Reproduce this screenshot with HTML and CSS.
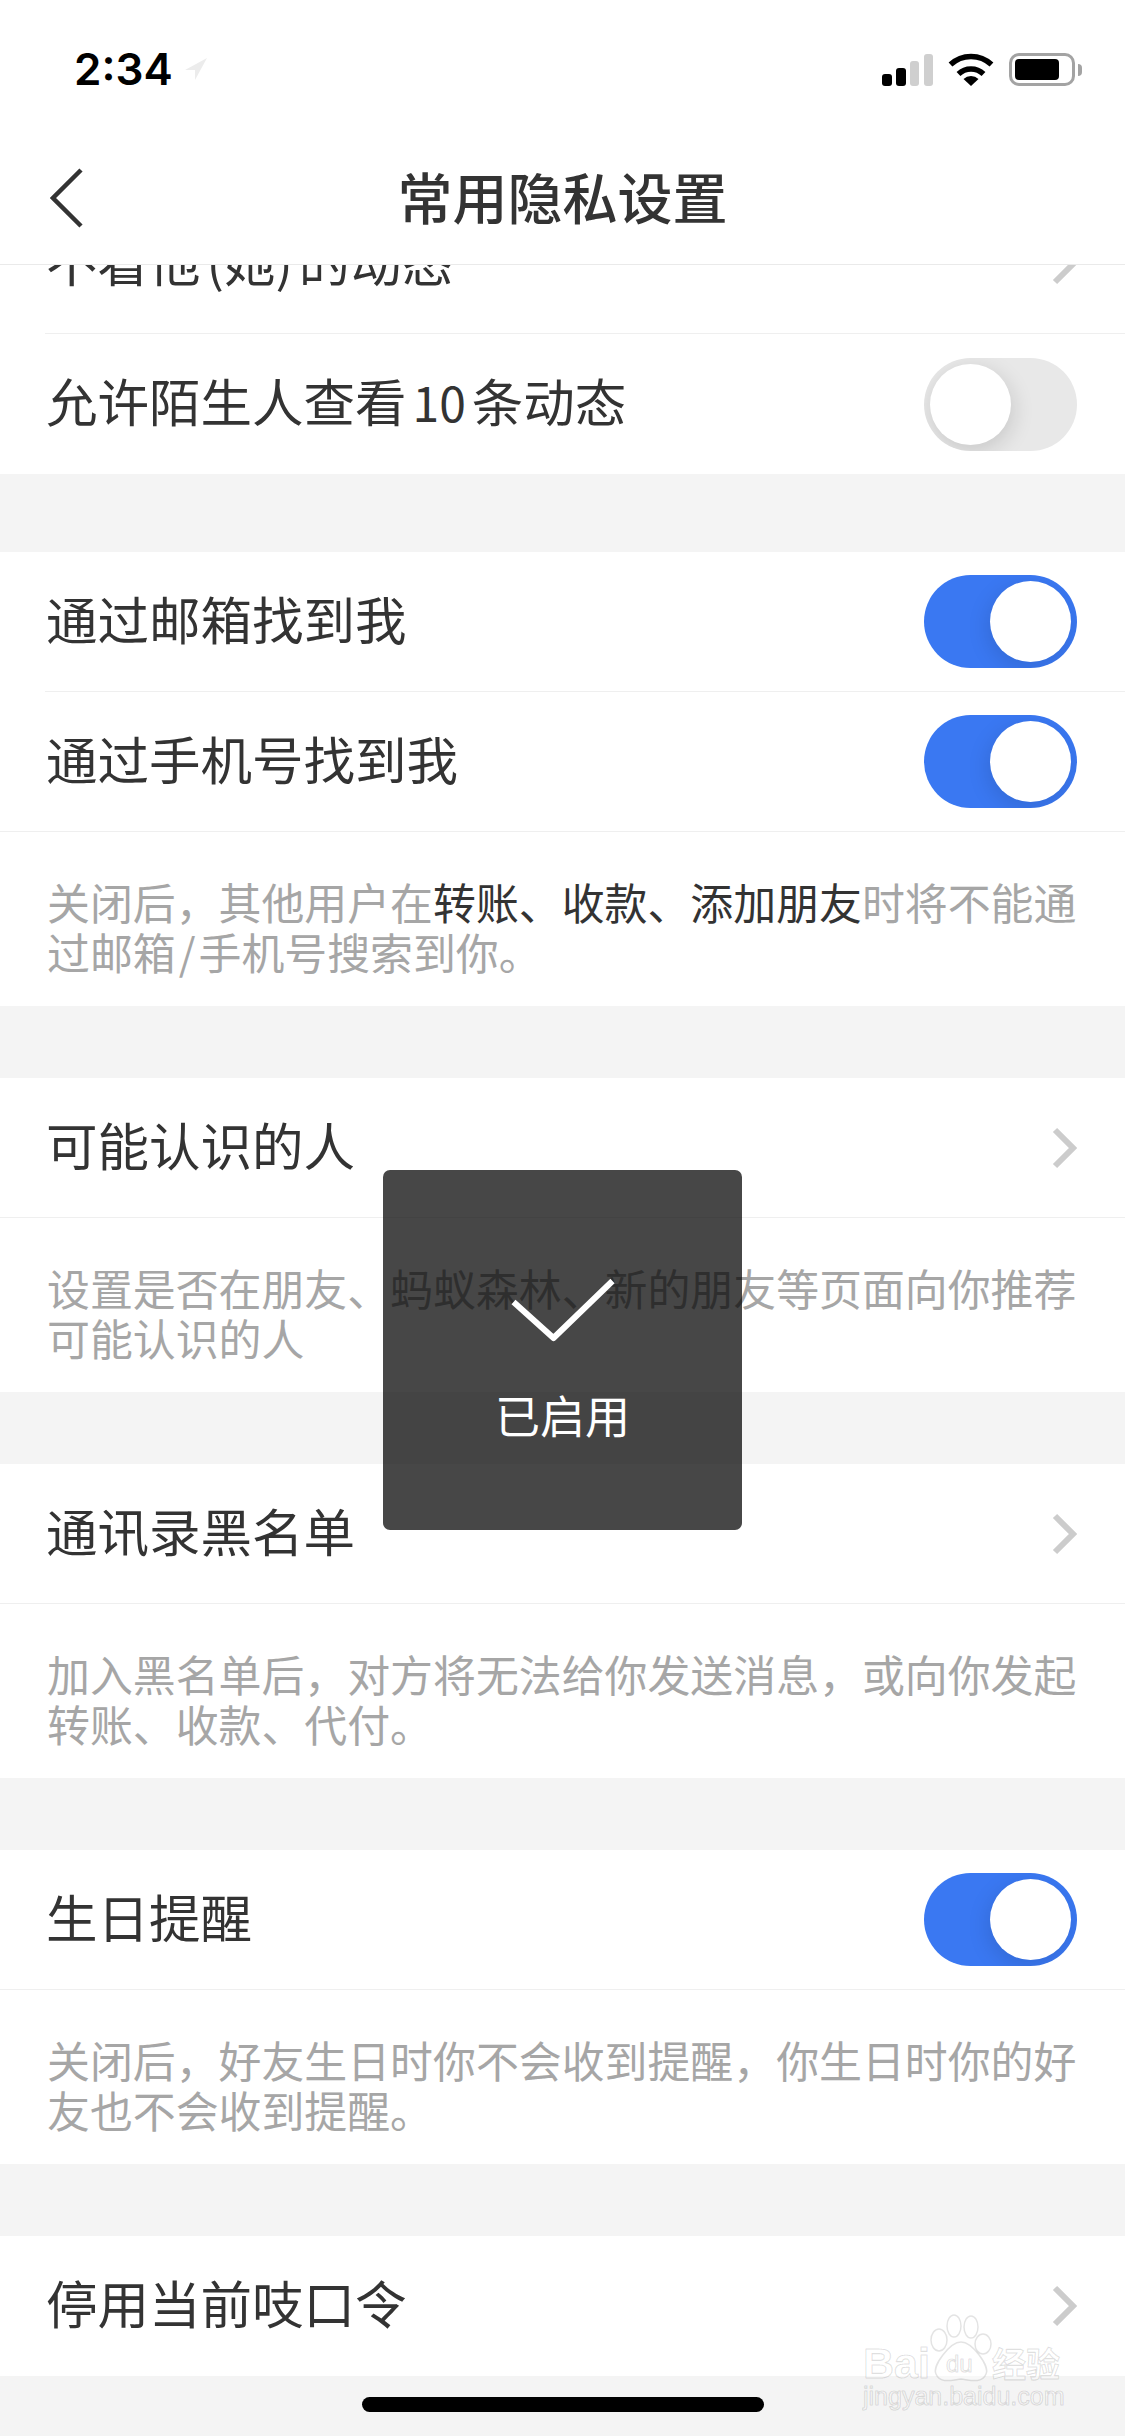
FILE: index.html
```html
<!DOCTYPE html>
<html lang="zh-CN">
<head>
<meta charset="utf-8">
<title>常用隐私设置</title>
<link rel="stylesheet" href="styles.css">
</head>
<body>
<div class="phone">
  <header class="top">
    <div class="status">
      <div class="status-left">
        <span class="time">2:34</span>
        <svg class="loc" width="22" height="22" viewBox="0 0 22 22"><path d="M22 0 L0 12 L10 12 L10 22 Z" fill="#ececec"/></svg>
      </div>
      <div class="status-right">
        <svg class="signal" width="51" height="32" viewBox="0 0 51 32">
          <rect x="0" y="20" width="10" height="12" rx="3" fill="#000"/>
          <rect x="14" y="14" width="10" height="18" rx="3" fill="#000"/>
          <rect x="28" y="7" width="9" height="25" rx="3" fill="#cfcfcf"/>
          <rect x="42" y="0" width="9" height="32" rx="3" fill="#cfcfcf"/>
        </svg>
        <svg class="wifi" width="46" height="33" viewBox="0 0 46 33">
          <path d="M2.5 11.5 A30 30 0 0 1 43.5 11.5" fill="none" stroke="#000" stroke-width="5.5"/>
          <path d="M10.5 21 A18 18 0 0 1 35.5 21" fill="none" stroke="#000" stroke-width="5.5"/>
          <path d="M23 33 L15.5 26 A11 11 0 0 1 30.5 26 Z" fill="#000"/>
        </svg>
        <div class="battery"><div class="battery-fill"></div></div>
        <div class="battery-tip"></div>
      </div>
    </div>
    <nav class="nav">
      <svg class="back" width="34" height="60" viewBox="0 0 34 60"><path d="M31 2 L3 30 L31 58" fill="none" stroke="#333" stroke-width="4.5"/></svg>
      <h1 class="title">常用隐私设置</h1>
      <span></span>
    </nav>
  </header>

  <main class="scroll">
    <section class="group group-clipped">
      <div class="row row-inset">
        <span class="label">不看他<span class="paren">(她)</span>的动态</span>
        <svg class="chev" width="28" height="44" viewBox="0 0 28 44"><path d="M6 4 L24 22 L6 40" fill="none" stroke="#ccc" stroke-width="6"/></svg>
      </div>
      <div class="row">
        <span class="label">允许陌生人查看<span class="num">10</span>条动态</span>
        <div class="toggle"><div class="knob"></div></div>
      </div>
    </section>

    <section class="group group-second">
      <div class="row row-inset">
        <span class="label">通过邮箱找到我</span>
        <div class="toggle on"><div class="knob"></div></div>
      </div>
      <div class="row row-full">
        <span class="label">通过手机号找到我</span>
        <div class="toggle on"><div class="knob"></div></div>
      </div>
      <p class="note">关闭后，其他用户在<em class="strong">转账、收款、添加朋友</em>时将不能通过邮箱<span class="slash">/</span>手机号搜索到你。</p>
    </section>

    <section class="group">
      <div class="row row-full">
        <span class="label">可能认识的人</span>
        <svg class="chev" width="28" height="44" viewBox="0 0 28 44"><path d="M6 4 L24 22 L6 40" fill="none" stroke="#ccc" stroke-width="6"/></svg>
      </div>
      <p class="note">设置是否在朋友、蚂蚁森林、新的朋友等页面向你推荐可能认识的人</p>
    </section>

    <section class="group">
      <div class="row row-full">
        <span class="label">通讯录黑名单</span>
        <svg class="chev" width="28" height="44" viewBox="0 0 28 44"><path d="M6 4 L24 22 L6 40" fill="none" stroke="#ccc" stroke-width="6"/></svg>
      </div>
      <p class="note">加入黑名单后，对方将无法给你发送消息，或向你发起转账、收款、代付。</p>
    </section>

    <section class="group">
      <div class="row row-full">
        <span class="label">生日提醒</span>
        <div class="toggle on"><div class="knob"></div></div>
      </div>
      <p class="note">关闭后，好友生日时你不会收到提醒，你生日时你的好友也不会收到提醒。</p>
    </section>

    <section class="group">
      <div class="row">
        <span class="label">停用当前吱口令</span>
        <svg class="chev" width="28" height="44" viewBox="0 0 28 44"><path d="M6 4 L24 22 L6 40" fill="none" stroke="#ccc" stroke-width="6"/></svg>
      </div>
    </section>
  </main>

  <div class="toast">
    <svg class="toast-check" width="112" height="68" viewBox="0 0 112 68"><path d="M6.5 24 L46.5 60 L105.5 3" fill="none" stroke="#fff" stroke-width="6" stroke-linejoin="round"/></svg>
    <span class="toast-text">已启用</span>
  </div>

  <svg class="watermark" width="204" height="104" viewBox="0 0 204 104">
    <g class="wm-paw">
      <ellipse cx="77" cy="28" rx="8" ry="11"/>
      <ellipse cx="92" cy="14" rx="7" ry="11"/>
      <ellipse cx="109" cy="15" rx="7" ry="11"/>
      <ellipse cx="121" cy="32" rx="8" ry="10"/>
      <path d="M99 30 C110 30 128 54 124 62 C120 72 108 68 99 67 C90 68 78 72 74 62 C70 54 88 30 99 30 Z"/>
    </g>
    <text class="wm-big" x="1" y="66">Bai</text>
    <text class="wm-du" x="84" y="60">du</text>
    <text class="wm-cn" x="130" y="65">经验</text>
    <text class="wm-url" x="1" y="93">jingyan.baidu.com</text>
  </svg>

  <div class="home"></div>
</div>
</body>
</html>
```

FILE: styles.css
```css
* { box-sizing: border-box; }
html, body { margin: 0; padding: 0; }
body {
  width: 1125px;
  height: 2436px;
  overflow: hidden;
  background: #f4f4f4;
  font-family: "Noto Sans CJK SC", "Noto Sans", sans-serif;
}
.phone {
  position: relative;
  width: 1125px;
  height: 2436px;
  overflow: hidden;
  display: flex;
  flex-direction: column;
}
.top {
  position: relative;
  z-index: 2;
  flex: none;
  background: #fff;
  border-bottom: 1px solid #eaeaea;
  height: 265px;
}
.status {
  height: 132px;
  display: flex;
  justify-content: space-between;
  align-items: flex-start;
  padding: 53px 43px 0 74px;
}
.status-left {
  display: flex;
  align-items: center;
  gap: 12px;
  height: 32px;
}
.time {
  font-family: Inter, Roboto, "Liberation Sans", sans-serif;
  font-weight: 600;
  font-size: 44px;
  line-height: 32px;
  color: #000;
}
.status-right {
  display: flex;
  align-items: center;
  height: 33px;
}
.signal { margin-right: 15px; }
.wifi { margin-right: 15px; }
.battery {
  width: 66px;
  height: 33px;
  border: 3px solid #a3a3a3;
  border-radius: 10px;
  padding: 3px;
}
.battery-fill {
  width: 44px;
  height: 21px;
  background: #000;
  border-radius: 4px;
}
.battery-tip {
  width: 4px;
  height: 12px;
  margin-left: 3px;
  background: #a3a3a3;
  border-radius: 0 5px 5px 0;
}
.nav {
  height: 132px;
  display: grid;
  grid-template-columns: 1fr auto 1fr;
  align-items: center;
}
.back { margin-left: 50px; }
.title {
  margin: 0;
  padding-bottom: 6px;
  font-size: 55px;
  line-height: 70px;
  font-weight: 500;
  color: #333;
}
.scroll {
  flex: none;
  margin-top: -71px;
}
.group { background: #fff; margin-top: 72px; }
.group-clipped { margin-top: 0; }
.group-second { margin-top: 78px; }
.row {
  height: 140px;
  padding: 0 48px 0 46px;
  display: flex;
  justify-content: space-between;
  align-items: center;
}
.row-inset {
  margin-left: 45px;
  padding-left: 1px;
  border-bottom: 1px solid #efefef;
}
.row-full { border-bottom: 1px solid #efefef; }
.label {
  font-size: 51.5px;
  line-height: 70px;
  padding-bottom: 8px;
  color: #333;
}
.num { font-size: 48px; margin: 0 6px; }
.paren { margin: 0 6px; }
.slash { margin: 0 3px; }
.note {
  margin: 0;
  height: 174px;
  padding: 44px 46px 0 47px;
  font-size: 42.9px;
  line-height: 50px;
  color: #a6a6a6;
}
.strong { font-style: normal; color: #333; }
.toggle {
  position: relative;
  width: 153px;
  height: 93px;
  border-radius: 47px;
  overflow: hidden;
  background: #e8e8e8;
  flex: none;
}
.toggle.on { background: #3a78f2; }
.knob {
  position: absolute;
  top: 6px;
  left: 6px;
  width: 81px;
  height: 81px;
  border-radius: 50%;
  background: #fff;
  box-shadow: 2px 6px 22px rgba(0, 0, 0, 0.14);
}
.toggle.on .knob {
  left: 66px;
  box-shadow: -2px 6px 22px rgba(0, 0, 0, 0.12);
}
.toast {
  position: absolute;
  z-index: 3;
  left: 383px;
  top: 1170px;
  width: 359px;
  height: 360px;
  border-radius: 7px;
  background: rgba(0, 0, 0, 0.72);
  display: flex;
  flex-direction: column;
  align-items: center;
  padding-top: 108px;
}
.toast-check { margin-bottom: 44px; }
.toast-text {
  font-size: 45px;
  line-height: 50px;
  color: #fff;
}
.watermark {
  position: absolute;
  z-index: 4;
  left: 862px;
  top: 2312px;
}
.wm-paw { fill: rgba(255, 255, 255, 0.35); stroke: rgba(0, 0, 0, 0.11); stroke-width: 1.5; }
.wm-big, .wm-du, .wm-cn, .wm-url {
  fill: rgba(255, 255, 255, 0.45);
  stroke: rgba(0, 0, 0, 0.12);
  stroke-width: 1.2;
}
.wm-big { font: bold 43px "Liberation Sans", sans-serif; }
.wm-du { font: 24px "Liberation Sans", sans-serif; }
.wm-cn { font: bold 34px "Noto Sans CJK SC", sans-serif; }
.wm-url { font: 25px "Liberation Sans", sans-serif; }
.home {
  position: absolute;
  z-index: 4;
  left: 362px;
  top: 2397px;
  width: 402px;
  height: 15px;
  border-radius: 8px;
  background: #000;
}
```
